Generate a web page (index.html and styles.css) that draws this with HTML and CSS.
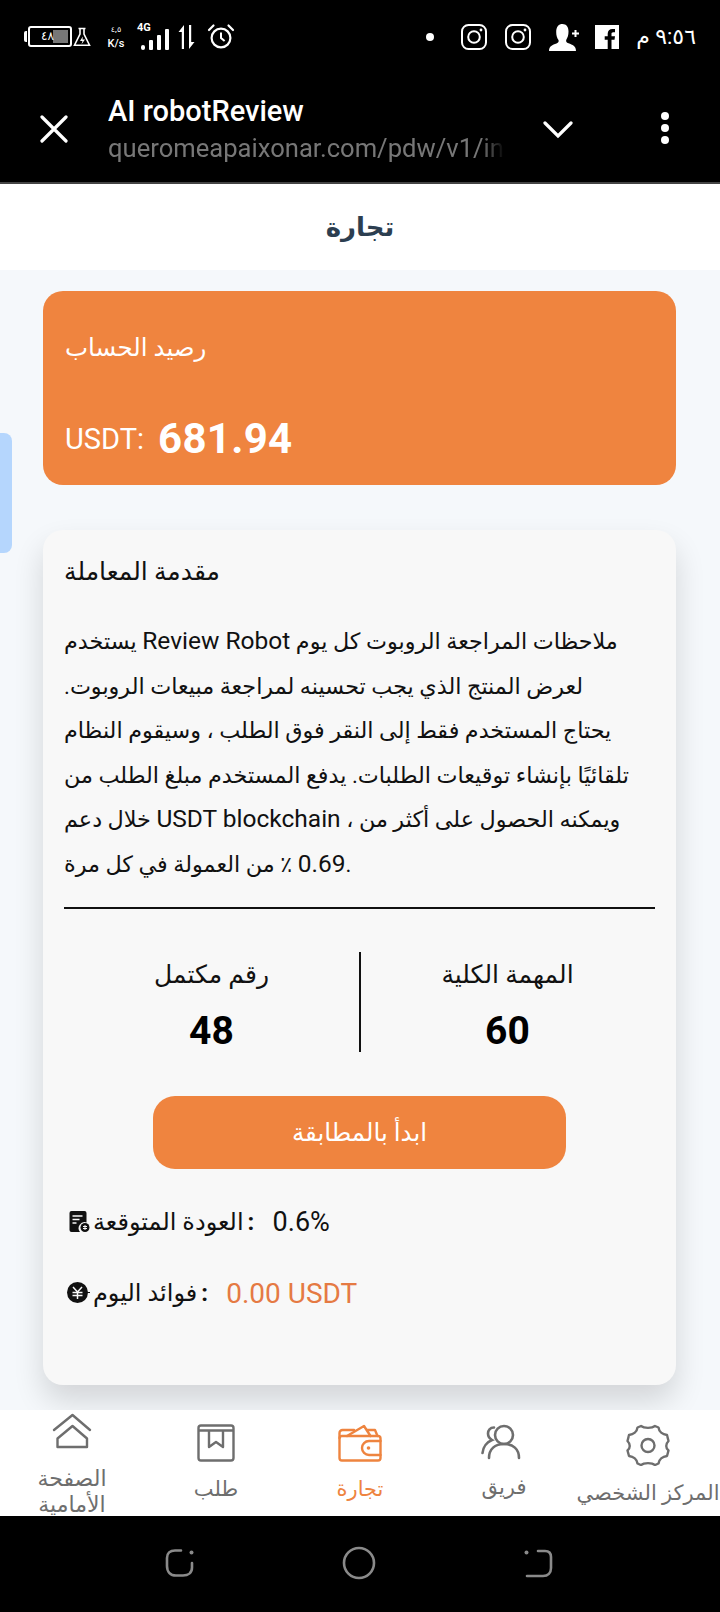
FILE: index.html
```html
<!DOCTYPE html>
<html lang="ar">
<head>
    <meta charset="UTF-8">
    <meta name="viewport" content="width=device-width, initial-scale=1.0">
    <title>AI robotReview</title>
    <link rel="stylesheet" href="styles.css">
</head>
<body>
    <div class="top-black">
        <div class="status-bar">
            <div class="status-left">
                <div class="battery"><span class="battery-fill"></span><span class="battery-text">٤٨</span></div>
                <svg class="ic-flask" width="18" height="20" viewBox="0 0 18 20" fill="none" stroke="#fff" stroke-width="1.6"><path d="M5.5 1.5h7M7 1.5v5.5L1.5 18.2h15L11 7V1.5"/><path d="M9.8 9.5 7 14h2.5l-1 3.2L12 12.5H9.5z" fill="#fff" stroke="none"/></svg>
                <div class="speed"><span class="speed-num">٤,٥</span><span class="speed-unit">K/s</span></div>
                <div class="signal">
                    <span class="signal-4g">4G</span>
                    <svg width="28" height="22" viewBox="0 0 28 22" fill="#fff"><rect x="0" y="16" width="4" height="5" rx="2"/><rect x="8" y="11" width="4" height="10" rx="1"/><rect x="16" y="6" width="4" height="15" rx="1"/><rect x="24" y="0" width="4" height="21" rx="1"/></svg>
                </div>
                <svg class="ic-arrows" width="18" height="26" viewBox="0 0 18 26" fill="#fff"><path d="M6 1v24H3.8V8H.5z"/><path d="M11 25V1h2.2v17h3.3z"/></svg>
                <svg class="ic-alarm" width="28" height="27" viewBox="0 0 27 27" fill="none" stroke="#fff" stroke-width="2.2"><circle cx="13.5" cy="15" r="9.4"/><path d="M13.5 9.5V15l3.6 3" stroke-width="2"/><path d="M1.5 7 6 2.5M25.5 7 21 2.5" stroke-linecap="round"/></svg>
            </div>
            <div class="status-right">
                <span class="status-dot"></span>
                <svg class="ic-insta" width="26" height="26" viewBox="0 0 26 26" fill="none" stroke="#fff" stroke-width="2"><rect x="1" y="1" width="24" height="24" rx="6.5"/><circle cx="13" cy="13" r="5.8"/><circle cx="20" cy="6" r="1.4" fill="#fff" stroke="none"/></svg>
                <svg class="ic-insta" width="26" height="26" viewBox="0 0 26 26" fill="none" stroke="#fff" stroke-width="2"><rect x="1" y="1" width="24" height="24" rx="6.5"/><circle cx="13" cy="13" r="5.8"/><circle cx="20" cy="6" r="1.4" fill="#fff" stroke="none"/></svg>
                <svg class="ic-person" width="30" height="28" viewBox="0 0 30 28" fill="#fff"><path d="M0 28c0-5 3.500-6 7.500-7.500 2-.8 2.500-2 2-3.500-1.500-2-2.300-4.500-2.300-8C7.200 3.500 9.800 1 13.500 1s6 2.700 6 7.500c0 3.500-.8 6-2.300 8.500-.4 1.500.3 2.600 2.300 3.300 4 1.500 7.500 2.700 7.500 7.700z"/><path d="M23 9.500h2.500V7h2v2.500H30v2h-2.500V14h-2v-2.500H23z"/></svg>
                <svg class="ic-fb" width="24" height="24" viewBox="0 0 24 24"><rect width="24" height="24" fill="#fff"/><path d="M16.500 24v-9.300h3l.5-3.500h-3.500V9c0-1 .3-1.700 1.800-1.700H20V4.100c-.4 0-1.500-.1-2.700-.1-2.700 0-4.600 1.700-4.600 4.700v2.500H9.700v3.500h3V24z" fill="#000"/></svg>
                <span class="clock">٩:٥٦ م</span>
            </div>
        </div>
        <div class="browser-bar">
            <svg class="ic-close" width="28" height="28" viewBox="0 0 28 28" stroke="#fff" stroke-width="3.200" stroke-linecap="round"><path d="M2 2l24 24M26 2 2 26"/></svg>
            <div class="browser-title">
                <div class="site-name">AI robotReview</div>
                <div class="site-url">queromeapaixonar.com/pdw/v1/in</div>
            </div>
            <svg class="ic-chevron" width="30" height="18" viewBox="0 0 30 18" fill="none" stroke="#fff" stroke-width="3.200" stroke-linecap="round"><path d="M2 2l13 13L28 2"/></svg>
            <div class="kebab"><span></span><span></span><span></span></div>
        </div>
    </div>

    <header class="page-title">تجارة</header>

    <main class="content">
        <div class="side-tab"></div>

        <section class="balance-card">
            <div class="balance-label">رصيد الحساب</div>
            <div class="balance-row">
                <span class="balance-unit">USDT:</span>
                <span class="balance-value">681.94</span>
            </div>
        </section>

        <section class="intro-card">
            <h2 class="intro-title">مقدمة المعاملة</h2>
            <div class="intro-text">
                <div>يستخدم <span class="latin">Review Robot</span> ملاحظات المراجعة الروبوت كل يوم</div>
                <div><span dir="rtl">لعرض المنتج الذي يجب تحسينه لمراجعة مبيعات الروبوت.</span></div>
                <div>يحتاج المستخدم فقط إلى النقر فوق الطلب ، وسيقوم النظام</div>
                <div>تلقائيًا بإنشاء توقيعات الطلبات. يدفع المستخدم مبلغ الطلب من</div>
                <div>خلال دعم <span class="latin">USDT blockchain</span> <span dir="rtl">ويمكنه الحصول على أكثر من ،</span></div>
                <div><span dir="rtl"><span class="latin">0.69</span> ٪ من العمولة في كل مرة</span>.</div>
            </div>
            <div class="stats">
                <div class="stat">
                    <div class="stat-label">رقم مكتمل</div>
                    <div class="stat-value">48</div>
                </div>
                <div class="stat stat-right">
                    <div class="stat-label">المهمة الكلية</div>
                    <div class="stat-value">60</div>
                </div>
            </div>
            <button class="start-btn">ابدأ بالمطابقة</button>
            <div class="info-row">
                <svg class="ic-doc" width="21" height="22" viewBox="0 0 20 22"><path d="M2 0h13a2 2 0 0 1 2 2v9.500a6 6 0 0 0-6.500 9.500H2a2 2 0 0 1-2-2V2a2 2 0 0 1 2-2z" fill="#111"/><path d="M3 5h10M3 8.500h7M3 12h4" stroke="#f8f8f8" stroke-width="1.600"/><circle cx="15.500" cy="16.500" r="4.500" fill="#111"/><path d="M13.500 15.500h4M13.500 17.500h4M15.500 14v5" stroke="#f8f8f8" stroke-width="1"/></svg>
                <span class="info-label">العودة المتوقعة</span>
                <span class="info-colon">:</span>
                <span class="info-value">0.6%</span>
            </div>
            <div class="info-row">
                <svg class="ic-yen" width="24" height="22" viewBox="0 0 24 22"><circle cx="10.500" cy="10.500" r="10.500" fill="#111"/><path d="M6 5l4.500 5L15 5M5.500 10.500h10M5.500 13.500h10M10.500 10v7" fill="none" stroke="#f8f8f8" stroke-width="1.500"/><path d="M17 10.500h6" stroke="#111" stroke-width="1"/></svg>
                <span class="info-label">فوائد اليوم</span>
                <span class="info-colon">:</span>
                <span class="info-value orange">0.00 USDT</span>
            </div>
        </section>
    </main>

    <nav class="tabbar">
        <div class="tab tab-home">
            <svg width="40" height="36" viewBox="0 0 40 36" fill="none" stroke="#6e6e6e" stroke-width="2.400" stroke-linecap="round" stroke-linejoin="round"><path d="M2 17 20.500 2 38 17"/><path d="M5.500 34V25.500L20.500 13 35 25.500V34z"/></svg>
            <span>الصفحة الأمامية</span>
        </div>
        <div class="tab">
            <svg width="38" height="38" viewBox="0 0 38 38" fill="none" stroke="#6e6e6e" stroke-width="2.400" stroke-linejoin="round"><rect x="1.500" y="1.500" width="35" height="35" rx="2.500"/><path d="M1.500 6.500h35M12 6.500v16.500l7-5 7 5V6.500"/></svg>
            <span>طلب</span>
        </div>
        <div class="tab active">
            <svg width="44" height="38" viewBox="0 0 44 38" fill="none" stroke="#ee843f" stroke-width="2.400" stroke-linecap="round" stroke-linejoin="round"><rect x="1.500" y="12" width="41" height="24.500" rx="2.500"/><path d="M1.500 14V9a3 3 0 0 1 3-3H16"/><path d="M9 12 26 2l6.500 10M29.500 6H37l2.500 6"/><path d="M42.500 17H31a6.500 6.500 0 0 0 0 14h11.500"/><circle cx="30.500" cy="24" r="1.800" fill="#ee843f" stroke="none"/></svg>
            <span>تجارة</span>
        </div>
        <div class="tab">
            <svg class="ic-team" width="40" height="36" viewBox="0 0 40 36" fill="none" stroke="#6e6e6e" stroke-width="2.600" stroke-linecap="round"><circle cx="23" cy="11" r="9"/><path d="M8 34c0-9 6-14 15-14s15 5 15 14"/><path d="M13 3.500C9 3.500 7 6.500 7 9.500c0 3 1.500 5 4 6.500-5 2-9 7-9.500 13"/></svg>
            <span>فريق</span>
        </div>
        <div class="tab">
            <svg width="44" height="42" viewBox="0 0 44 42" fill="none" stroke="#6e6e6e" stroke-width="2.400" stroke-linejoin="round"><path d="M15 2c3 2.500 11 2.500 14 0l3.500 1.500c.5 4 4 7 8.500 7.500l1.500 6c-3 3-3 7 0 9.500L41 32c-4.500.5-8 3.500-8.500 7.500L29 41c-3-2.500-11-2.500-14 0l-3.500-1.500C11 35.500 7.500 32.500 3 32l-1.500-5.500c3-2.500 3-6.500 0-9.500L3 11c4.500-.5 8-3.500 8.500-7.500z"/><circle cx="22" cy="21.500" r="6.500"/></svg>
            <span>المركز الشخصي</span>
        </div>
    </nav>

    <div class="bottom-black">
        <svg class="ic-recent" width="30" height="30" viewBox="0 0 30 30" fill="none" stroke="#8a8a8a" stroke-width="2.600" stroke-linecap="round"><path d="M16 2.500H10C5 2.500 2 5.500 2 10v8c0 6 3.500 9.500 9 9.500h7c5 0 9-2.500 9-8V15"/><circle cx="26.500" cy="4.500" r="2" fill="#8a8a8a" stroke="none"/></svg>
        <svg width="34" height="34" viewBox="0 0 34 34" fill="none" stroke="#8a8a8a" stroke-width="2.600"><circle cx="17" cy="17" r="15"/></svg>
        <svg width="30" height="30" viewBox="0 0 30 30" fill="none" stroke="#8a8a8a" stroke-width="2.600" stroke-linecap="round"><path d="M15 3h7c4 0 6 2 6 6v11c0 5-3 8-8 8H4"/><circle cx="3.500" cy="4.500" r="2" fill="#8a8a8a" stroke="none"/></svg>
    </div>
</body>
</html>
```

FILE: styles.css
```css
* {
    box-sizing: border-box;
}
html, body {
    margin: 0;
    padding: 0;
}
body {
    width: 720px;
    height: 1612px;
    display: flex;
    flex-direction: column;
    overflow: hidden;
    font-family: Roboto, "DejaVu Sans", sans-serif;
    background: #f5f8fb;
    color: #111;
    direction: ltr;
}

/* phone + in-app browser chrome */
.top-black {
    height: 184px;
    background: #000;
    border-bottom: 2px solid #444;
    color: #fff;
    flex: none;
}
.status-bar {
    height: 72px;
    padding: 1px 24px 0 24px;
    display: flex;
    align-items: center;
    justify-content: space-between;
}
.status-left, .status-right {
    display: flex;
    align-items: center;
}
.battery {
    position: relative;
    width: 44px;
    height: 21px;
    border: 2px solid #fff;
    border-radius: 3px;
    margin-left: 4px;
}
.battery::before {
    content: "";
    position: absolute;
    left: -6px;
    top: 3px;
    width: 3px;
    height: 11px;
    background: #fff;
    border-radius: 2px 0 0 2px;
}
.battery-fill {
    position: absolute;
    right: 2px;
    top: 2px;
    bottom: 2px;
    width: 15px;
    background: #777;
}
.battery-text {
    position: absolute;
    left: 11px;
    top: 0;
    font-size: 12px;
    line-height: 17px;
}
.ic-flask {
    margin-left: 1px;
}
.speed {
    display: flex;
    flex-direction: column;
    align-items: center;
    margin-left: 14px;
    width: 22px;
    font-size: 11px;
    font-weight: 500;
}
.speed-num {
    font-size: 8px;
    line-height: 14px;
}
.speed-unit {
    line-height: 14px;
}
.signal {
    position: relative;
    margin-left: 14px;
    width: 28px;
    height: 26px;
    padding-top: 5px;
}
.signal-4g {
    position: absolute;
    left: -4px;
    top: -3px;
    font-size: 11px;
    font-weight: 700;
}
.ic-arrows {
    margin-left: 9px;
}
.ic-alarm {
    margin-left: 11px;
}
.status-dot {
    width: 8px;
    height: 8px;
    background: #fff;
    border-radius: 50%;
    margin-right: 27px;
}
.ic-insta {
    margin-right: 18px;
}
.ic-person {
    margin-right: 16px;
    margin-left: 0;
}
.clock {
    margin-left: 15px;
    font-size: 22px;
    width: 62px;
    white-space: nowrap;
    direction: rtl;
    letter-spacing: 1px;
}
.browser-bar {
    height: 110px;
    position: relative;
    display: flex;
    align-items: center;
}
.ic-close {
    margin-left: 40px;
    margin-top: 4px;
    flex: none;
}
.browser-title {
    width: 397px;
    margin-left: 40px;
    overflow: hidden;
    white-space: nowrap;
    margin-top: 6px;
}
.site-name {
    font-size: 29px;
    font-weight: 500;
    line-height: 37px;
}
.site-url {
    font-size: 25.6px;
    line-height: 37px;
    color: #777;
    -webkit-mask-image: linear-gradient(to right, #000 94%, transparent);
    mask-image: linear-gradient(to right, #000 94%, transparent);
}
.ic-chevron {
    margin-left: 38px;
    margin-top: 6px;
}
.kebab {
    margin-left: 88px;
    margin-top: 2px;
    display: flex;
    flex-direction: column;
    gap: 4px;
}
.kebab span {
    width: 8px;
    height: 8px;
    background: #fff;
    border-radius: 50%;
}

.page-title {
    height: 86px;
    flex: none;
    background: #fff;
    text-align: center;
    font-size: 26px;
    font-weight: 700;
    line-height: 86px;
    color: #2c3e50;
}

.content {
    flex: 1;
    position: relative;
    padding: 21px 44px 0 43px;
    overflow: hidden;
}
.side-tab {
    position: absolute;
    left: 0;
    top: 163px;
    width: 12px;
    height: 120px;
    background: #b5d6fd;
    border-radius: 0 8px 8px 0;
}
.balance-card {
    height: 194px;
    background: #ef843f;
    border-radius: 20px;
    color: #fff;
    padding: 39px 22px 0;
}
.balance-label {
    font-size: 24.5px;
    line-height: 36px;
}
.balance-row {
    margin-top: 48px;
    display: flex;
    align-items: center;
    gap: 14px;
}
.balance-unit {
    font-size: 29px;
}
.balance-value {
    font-size: 42px;
    font-weight: 700;
    letter-spacing: 0.3px;
}

.intro-card {
    margin-top: 45px;
    height: 855px;
    background: #f8f8f8;
    border-radius: 20px;
    box-shadow: 0 16px 30px rgba(0, 0, 0, 0.14);
    padding: 22px 21px 0;
}
.intro-title {
    margin: 0;
    font-size: 25px;
    font-weight: 400;
    line-height: 40px;
}
.intro-text {
    margin-top: 27px;
    font-size: 22.3px;
    line-height: 44.5px;
    white-space: nowrap;
    padding-bottom: 21px;
    border-bottom: 2px solid #111;
}
.latin {
    font-size: 24.5px;
}
.stats {
    margin-top: 43px;
    display: flex;
    height: 100px;
}
.stat {
    width: 295px;
    text-align: center;
}
.stat-right {
    border-left: 2px solid #111;
}
.stat-label {
    font-size: 25px;
    line-height: 46px;
}
.stat-value {
    margin-top: 5px;
    color: #000;
    font-size: 39px;
    font-weight: 700;
    line-height: 56px;
}
.start-btn {
    display: block;
    margin: 44px auto 0;
    width: 413px;
    height: 73px;
    border: 0;
    border-radius: 22px;
    background: #ef843f;
    color: #fff;
    font-family: inherit;
    font-size: 24.5px;
}
.info-row {
    display: flex;
    align-items: center;
    height: 40px;
    margin-top: 33px;
    padding-left: 5px;
    font-size: 24px;
}
.info-row + .info-row {
    margin-top: 31px;
}
.ic-doc {
    margin-right: 3px;
}
.ic-yen {
    margin-left: -2px;
    margin-right: 2px;
}
.info-colon {
    margin-left: 4px;
    width: 22px;
    font-weight: 700;
}
.info-value {
    font-size: 27px;
    margin-left: 3px;
}
.orange {
    color: #e57a43;
    font-size: 28px;
}

.tabbar {
    height: 106px;
    flex: none;
    background: #fff;
    display: grid;
    grid-template-columns: repeat(5, 144px);
    overflow: hidden;
    position: relative;
}
.tab {
    display: flex;
    flex-direction: column;
    align-items: center;
    padding-top: 14px;
    color: #6e6e6e;
    font-size: 21px;
    line-height: 26px;
    text-align: center;
}
.tab span {
    margin-top: 14px;
    white-space: nowrap;
}
.tab-home {
    padding-top: 3px;
}
.tab-home span {
    margin-top: 17px;
    white-space: normal;
    width: 90px;
    font-size: 22px;
}
.tab.active {
    color: #ee843f;
}
.ic-team {
    margin-left: -6px;
}

.bottom-black {
    height: 96px;
    flex: none;
    background: #000;
    display: flex;
    align-items: center;
    justify-content: center;
    gap: 147px;
    padding-bottom: 2px;
}
.ic-recent {
    margin-left: -3px;
}
```
